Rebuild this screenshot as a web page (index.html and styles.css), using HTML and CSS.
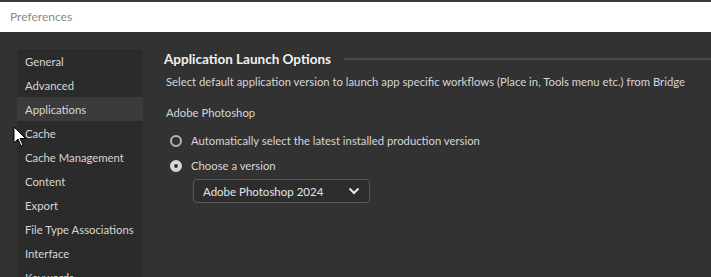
FILE: index.html
```html
<!DOCTYPE html>
<html lang="en">
<head>
    <meta charset="UTF-8" />
    <title>Preferences</title>
    <link rel="stylesheet" href="styles.css">
</head>
<body>
    <div class="titlebar">Preferences</div>

    <div class="ventana">
        <!-- Lista de secciones -->
        <ul class="menu">
            <li>General</li>
            <li>Advanced</li>
            <li class="activo">Applications</li>
            <li>Cache</li>
            <li>Cache Management</li>
            <li>Content</li>
            <li>Export</li>
            <li>File Type Associations</li>
            <li>Interface</li>
            <li>Keywords</li>
        </ul>

        <!-- Contenido de la sección -->
        <section class="contenido">
            <div class="titulo">
                <h2>Application Launch Options</h2>
                <span class="linea"></span>
            </div>
            <p class="descripcion">Select default application version to launch app specific workflows (Place in, Tools menu etc.) from Bridge</p>
            <p class="app">Adobe Photoshop</p>
            <label class="opcion"><span class="radio"></span>Automatically select the latest installed production version</label>
            <label class="opcion"><span class="radio marcado"></span>Choose a version</label>
            <div class="selector">
                <span>Adobe Photoshop 2024</span>
                <svg width="12" height="8" viewBox="0 0 12 8"><path d="M1.5 1.5 L6 6 L10.5 1.5" fill="none" stroke="#e8e8e8" stroke-width="2"/></svg>
            </div>
        </section>
    </div>

    <svg class="cursor" width="14" height="22" viewBox="0 0 14 22">
        <path d="M1 1 L1 17 L5 13 L8 20 L10 19 L7 12.5 L12.5 12.5 Z" fill="#fff" stroke="#000" stroke-width="1"/>
    </svg>
</body>
</html>
```

FILE: styles.css
```css
:root {
    --fondo: #323232;
    --menu: #2b2b2b;
    --activo: #3b3b3b;
    --texto: #d6d6d6;
}

* {
    margin: 0;
    padding: 0;
    box-sizing: border-box;
}

body {
    font-family: 'Lato', sans-serif;
    font-size: 11.3px;
    background: var(--fondo);
    color: var(--texto);
    height: 277px;
    overflow: hidden;
    border-top: 2px solid #3c3c3c;
}

.titlebar {
    background: #ffffff;
    color: #8a8a8a;
    height: 30px;
    line-height: 30px;
    padding-left: 10px;
    font-size: 12px;
}

.ventana {
    display: flex;
    padding: 17px 0 0 17px;
}

.menu {
    list-style: none;
    flex: none;
    width: 126px;
    background: var(--menu);
    height: 228px;
    overflow: hidden;
}

.menu li {
    height: 24px;
    line-height: 25px;
    padding-left: 8px;
    white-space: nowrap;
}

.menu li.activo {
    background: var(--activo);
}

.contenido {
    flex: 1;
    min-width: 0;
    padding: 0 0 0 21px;
}

.titulo {
    display: flex;
    align-items: center;
    gap: 13px;
    height: 19px;
}

.titulo h2 {
    font-size: 13.5px;
    font-weight: 700;
    color: #f0f0f0;
    white-space: nowrap;
}

.linea {
    flex: 1;
    height: 2px;
    background: #4a4a4a;
}

.descripcion {
    margin: 7px 0 0 2px;
    white-space: nowrap;
}

.app {
    margin: 18px 0 0 2px;
}

.opcion {
    display: flex;
    align-items: center;
    height: 25px;
    margin-left: 6px;
}

.opcion:first-of-type {
    margin-top: 9px;
}

.radio {
    width: 12px;
    height: 12px;
    border-radius: 50%;
    border: 2px solid #b4b4b4;
    margin-right: 9px;
}

.radio.marcado {
    border: 4px solid #d8d8d8;
    background: #333;
}

.selector {
    display: flex;
    justify-content: space-between;
    align-items: center;
    width: 177px;
    height: 24px;
    margin: 1px 0 0 29px;
    padding: 0 9px 0 9px;
    border: 1px solid #5a5a5a;
    border-radius: 4px;
    background: #2d2d2d;
    color: #e4e4e4;
    font-size: 11.5px;
}

.cursor {
    position: absolute;
    left: 13px;
    top: 126px;
}
```
